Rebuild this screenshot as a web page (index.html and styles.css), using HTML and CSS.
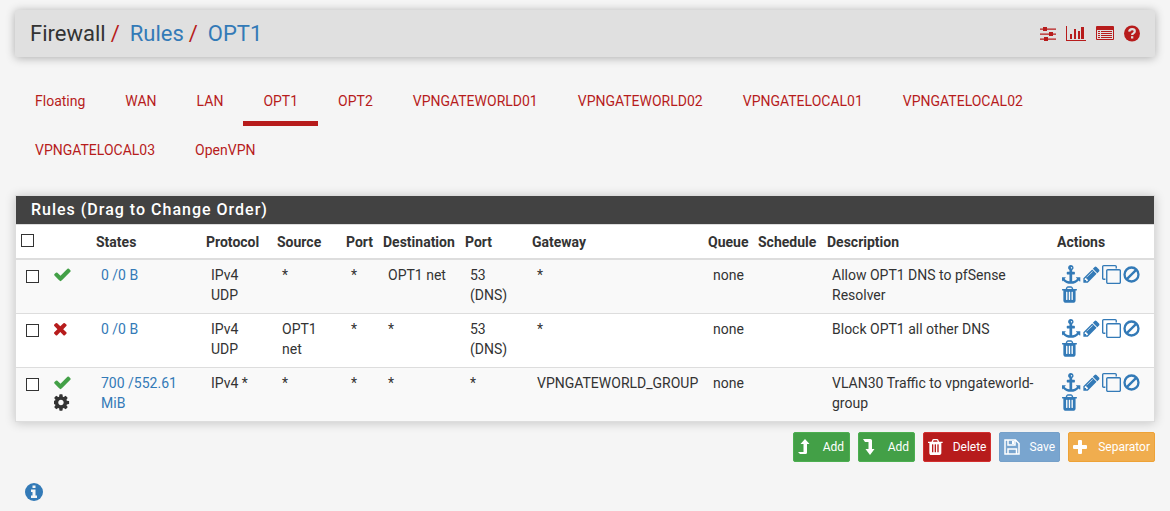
FILE: index.html
```html
<!DOCTYPE html>
<html lang="en">
<head>
<meta charset="utf-8">
<title>Firewall: Rules: OPT1</title>
<link rel="stylesheet" href="styles.css">
</head>
<body>
<svg class="sprite" aria-hidden="true">
  <symbol id="check" viewBox="192 0 1792 1792"><path d="M1671 566q0 40-28 68l-724 724-136 136q-28 28-68 28t-68-28l-136-136-362-362q-28-28-28-68t28-68l136-136q28-28 68-28t68 28l294 295 656-657q28-28 68-28t68 28l136 136q28 28 28 68z" transform="translate(90 0)"/></symbol>
  <symbol id="times" viewBox="300 0 1792 1792"><path d="M1490 1322q0 40-28 68l-136 136q-28 28-68 28t-68-28l-294-294-294 294q-28 28-68 28t-68-28l-136-136q-28-28-28-68t28-68l294-294-294-294q-28-28-28-68t28-68l136-136q28-28 68-28t68 28l294 294 294-294q28-28 68-28t68 28l136 136q28 28 28 68t-28 68l-294 294 294 294q28 28 28 68z"/></symbol>
  <symbol id="cog" viewBox="240 0 1792 1792"><path d="M1152 896q0-106-75-181t-181-75-181 75-75 181 75 181 181 75 181-75 75-181zm512-109v222q0 12-8 23t-20 13l-185 28q-19 54-39 91 35 50 107 138 10 12 10 25t-9 23q-27 37-99 108t-94 71q-12 0-26-9l-138-108q-44 23-91 38-16 136-29 186-7 28-36 28h-222q-14 0-24.500-8.500t-11.500-21.500l-28-184q-49-16-90-37l-141 107q-10 9-25 9-14 0-25-11-126-114-165-168-7-10-7-23 0-12 8-23 15-21 51-66.500t54-70.500q-27-50-41-99l-183-27q-13-2-21-12.500t-8-23.500v-222q0-12 8-23t19-13l186-28q14-46 39-92-40-57-107-138-10-12-10-24 0-10 9-23 26-36 98.500-107.500t94.500-71.500q13 0 26 10l138 107q44-23 91-38 16-136 29-186 7-28 36-28h222q14 0 24.500 8.500t11.500 21.500l28 184q49 16 90 37l142-107q9-9 24-9 13 0 25 10 129 119 165 170 7 8 7 22 0 12-8 23-15 21-51 66.500t-54 70.500q26 50 41 98l183 28q13 2 21 12.500t8 23.500z"/></symbol>
  <symbol id="anchor" viewBox="0 0 1792 1792"><path d="M960 256q0-26-19-45t-45-19-45 19-19 45 19 45 45 19 45-19 19-45zm768 928v352q0 22-20 30-8 2-12 2-12 0-23-9l-93-93q-119 143-318.500 226.500t-429.500 83.500-429.500-83.500-318.500-226.500l-93 93q-9 9-23 9-4 0-12-2-20-8-20-30v-352q0-14 9-23t23-9h352q22 0 30 20 8 19-7 35l-100 100q67 91 189.500 153.500t271.500 82.500v-647h-192q-26 0-45-19t-19-45v-128q0-26 19-45t45-19h192v-163q-58-34-93-92.500t-35-128.500q0-106 75-181t181-75 181 75 75 181q0 70-35 128.500t-93 92.500v163h192q26 0 45 19t19 45v128q0 26-19 45t-45 19h-192v647q149-20 271.500-82.500t189.500-153.500l-100-100q-15-16-7-35 8-20 30-20h352q14 0 23 9t9 23z"/></symbol>
  <symbol id="pencil" viewBox="0 0 1792 1792"><path d="M491 1536l91-91-235-235-91 91v107h128v128h107zm523-928q0-22-22-22-10 0-17 7l-542 542q-7 7-7 17 0 22 22 22 10 0 17-7l542-542q7-7 7-17zm-54-192l416 416-832 832h-416v-416zm683 96q0 53-37 90l-166 166-416-416 166-165q36-38 90-38 53 0 91 38l235 234q37 39 37 91z"/></symbol>
  <symbol id="clone" viewBox="0 0 1792 1792"><path d="M1664 1632v-1088q0-13-9.500-22.500t-22.500-9.500h-1088q-13 0-22.500 9.500t-9.500 22.500v1088q0 13 9.500 22.500t22.500 9.500h1088q13 0 22.500-9.500t9.500-22.500zm128-1088v1088q0 66-47 113t-113 47h-1088q-66 0-113-47t-47-113v-1088q0-66 47-113t113-47h1088q66 0 113 47t47 113zm-384-384v160h-128v-160q0-13-9.500-22.500t-22.500-9.500h-1088q-13 0-22.500 9.500t-9.500 22.500v1088q0 13 9.500 22.500t22.500 9.500h160v128h-160q-66 0-113-47t-47-113v-1088q0-66 47-113t113-47h1088q66 0 113 47t47 113z"/></symbol>
  <symbol id="ban" viewBox="0 0 1792 1792"><g fill="none" stroke="currentColor" stroke-width="220"><circle cx="896" cy="896" r="658"/><path d="M431 1361L1361 431"/></g></symbol>
  <symbol id="trash" viewBox="192 0 1792 1792"><path id="trash-shape" d="M704 1376v-704q0-14-9-23t-23-9h-64q-14 0-23 9t-9 23v704q0 14 9 23t23 9h64q14 0 23-9t9-23zm256 0v-704q0-14-9-23t-23-9h-64q-14 0-23 9t-9 23v704q0 14 9 23t23 9h64q14 0 23-9t9-23zm256 0v-704q0-14-9-23t-23-9h-64q-14 0-23 9t-9 23v704q0 14 9 23t23 9h64q14 0 23-9t9-23zm-544-992h448l-48-117q-7-9-17-11h-317q-10 2-17 11zm928 32v64q0 14-9 23t-23 9h-96v948q0 83-47 143.500t-113 60.500h-832q-66 0-113-58.500t-47-141.500v-952h-96q-14 0-23-9t-9-23v-64q0-14 9-23t23-9h309l70-167q15-37 54-63t79-26h320q40 0 79 26t54 63l70 167h309q14 0 23 9t9 23z"/></symbol>
  <symbol id="trash-large" viewBox="192 32 1536 1728"><use href="#trash-shape"/></symbol>
  <symbol id="sliders" viewBox="0 0 20 20"><path d="M2 4.500h16v1.300H2zM2 9.500h16v1.300H2zM2 14.500h16v1.300H2zM5 3h4v4H5zM11 8h4v4h-4zM6 13h4v4H6z"/></symbol>
  <symbol id="chart" viewBox="0 0 20 20"><path d="M0 2h1v14h19v1H0zM4 10h2v5H4zM8 5h2v10H8zM12 7h2v8h-2zM15 3h3v12h-3z"/></symbol>
  <symbol id="list" viewBox="0 0 20 20"><path fill-rule="evenodd" d="M3 2h16q1 0 1 1v12q0 1-1 1H3q-1 0-1-1V3q0-1 1-1zM3 6v9h16V6z"/><path d="M4 7h2v1H4zM7 7h11v1H7zM4 9h2v1H4zM7 9h11v1H7zM4 11h2v1H4zM7 11h11v1H7zM4 13h2v1H4zM7 13h11v1H7z"/></symbol>
  <symbol id="question" viewBox="0 0 20 20"><circle cx="10" cy="9.500" r="8"/><path d="M7.200 7.700q.2-2.600 2.900-2.600 2.700 0 2.700 2.200 0 1.300-1.500 2.100-1.200.6-1.200 1.700" fill="none" stroke="#e0e0e0" stroke-width="2.200"/><path fill="#e0e0e0" d="M9 12.200h2.300v2.300H9z"/></symbol>
  <symbol id="info" viewBox="0 0 18 18"><circle cx="9" cy="9" r="9"/><path fill="#f5f5f5" d="M7.500 2.500h3v2.500h-3zM6 6.500h4.500v6H12V15H6v-2.500h1.500V9H6z"/></symbol>
  <symbol id="up" viewBox="0 0 16 18"><path d="M0 14h5.500V6H2.500L7 1l4.500 5H9v8.500q0 1.500-1.500 1.500H2z"/></symbol>
  <symbol id="down" viewBox="0 0 16 18"><path d="M0 1h7.500Q9 1 9 2.500V11h2.500L7 17l-4.500-6h3V4H2z"/></symbol>
  <symbol id="save" viewBox="0 0 16 18"><path fill="none" stroke="currentColor" stroke-width="1.500" d="M1 2h10.500L15 5.500V16H1zM4 2v5h7V2M4 16v-5h8.500v5"/><path d="M8 3h2v3H8z"/></symbol>
  <symbol id="plus" viewBox="0 0 16 18"><path d="M6 2h2q1 0 1 1v4h4q1 0 1 1v2q0 1-1 1H9v4q0 1-1 1H6q-1 0-1-1v-4H1q-1 0-1-1V8q0-1 1-1h4V3q0-1 1-1z"/></symbol>
</svg>

<header class="page-header">
  <ol class="breadcrumb">
    <li>Firewall</li>
    <li><a href="#">Rules</a></li>
    <li><a href="#">OPT1</a></li>
  </ol>
  <nav class="header-tools" aria-label="Page tools">
    <a href="#" aria-label="Settings"><svg><use href="#sliders"/></svg></a>
    <a href="#" aria-label="Status"><svg><use href="#chart"/></svg></a>
    <a href="#" aria-label="Logs"><svg><use href="#list"/></svg></a>
    <a href="#" aria-label="Help"><svg><use href="#question"/></svg></a>
  </nav>
</header>

<nav class="tabs" aria-label="Interfaces">
  <a href="#">Floating</a>
  <a href="#">WAN</a>
  <a href="#">LAN</a>
  <a href="#" class="active" aria-current="page">OPT1</a>
  <a href="#">OPT2</a>
  <a href="#">VPNGATEWORLD01</a>
  <a href="#">VPNGATEWORLD02</a>
  <a href="#">VPNGATELOCAL01</a>
  <a href="#">VPNGATELOCAL02</a>
  <a href="#">VPNGATELOCAL03</a>
  <a href="#">OpenVPN</a>
</nav>

<main>
<section class="panel">
  <h2 class="panel-title">Rules (Drag to Change Order)</h2>
  <table class="rules">
    <colgroup>
      <col class="c-check"><col class="c-status"><col class="c-states"><col class="c-protocol"><col class="c-source"><col class="c-port"><col class="c-dest"><col class="c-dport"><col class="c-gateway"><col class="c-queue"><col class="c-schedule"><col class="c-desc"><col class="c-actions">
    </colgroup>
    <thead>
      <tr>
        <th><input type="checkbox" aria-label="Select all rules"></th>
        <th></th>
        <th>States</th><th>Protocol</th><th>Source</th><th>Port</th><th>Destination</th><th>Port</th><th>Gateway</th><th>Queue</th><th>Schedule</th><th>Description</th><th>Actions</th>
      </tr>
    </thead>
    <tbody>
      <tr>
        <td><input type="checkbox" aria-label="Select rule 1"></td>
        <td><div class="icons"><svg class="pass"><use href="#check"/></svg></div></td>
        <td><a href="#">0 /0 B</a></td>
        <td>IPv4 UDP</td><td>*</td><td>*</td><td>OPT1 net</td><td>53 (DNS)</td><td>*</td><td>none</td><td></td>
        <td>Allow OPT1 DNS to pfSense Resolver</td>
        <td><div class="icons">
          <a href="#" aria-label="Move"><svg><use href="#anchor"/></svg></a>
          <a href="#" aria-label="Edit"><svg><use href="#pencil"/></svg></a>
          <a href="#" aria-label="Copy"><svg><use href="#clone"/></svg></a>
          <a href="#" aria-label="Disable"><svg><use href="#ban"/></svg></a>
          <a href="#" aria-label="Delete"><svg><use href="#trash"/></svg></a>
        </div></td>
      </tr>
      <tr>
        <td><input type="checkbox" aria-label="Select rule 2"></td>
        <td><div class="icons"><svg class="block"><use href="#times"/></svg></div></td>
        <td><a href="#">0 /0 B</a></td>
        <td>IPv4 UDP</td><td>OPT1 net</td><td>*</td><td>*</td><td>53 (DNS)</td><td>*</td><td>none</td><td></td>
        <td>Block OPT1 all other DNS</td>
        <td><div class="icons">
          <a href="#" aria-label="Move"><svg><use href="#anchor"/></svg></a>
          <a href="#" aria-label="Edit"><svg><use href="#pencil"/></svg></a>
          <a href="#" aria-label="Copy"><svg><use href="#clone"/></svg></a>
          <a href="#" aria-label="Disable"><svg><use href="#ban"/></svg></a>
          <a href="#" aria-label="Delete"><svg><use href="#trash"/></svg></a>
        </div></td>
      </tr>
      <tr>
        <td><input type="checkbox" aria-label="Select rule 3"></td>
        <td><div class="icons"><svg class="pass"><use href="#check"/></svg><svg><use href="#cog"/></svg></div></td>
        <td><a href="#">700 /552.61 MiB</a></td>
        <td>IPv4 *</td><td>*</td><td>*</td><td>*</td><td>*</td><td>VPNGATEWORLD_GROUP</td><td>none</td><td></td>
        <td>VLAN30 Traffic to vpngateworld-group</td>
        <td><div class="icons">
          <a href="#" aria-label="Move"><svg><use href="#anchor"/></svg></a>
          <a href="#" aria-label="Edit"><svg><use href="#pencil"/></svg></a>
          <a href="#" aria-label="Copy"><svg><use href="#clone"/></svg></a>
          <a href="#" aria-label="Disable"><svg><use href="#ban"/></svg></a>
          <a href="#" aria-label="Delete"><svg><use href="#trash"/></svg></a>
        </div></td>
      </tr>
    </tbody>
  </table>
</section>

<div class="buttons">
  <button type="button" class="btn success"><svg><use href="#up"/></svg>Add</button>
  <button type="button" class="btn success"><svg><use href="#down"/></svg>Add</button>
  <button type="button" class="btn danger"><svg><use href="#trash-large"/></svg>Delete</button>
  <button type="button" class="btn primary"><svg><use href="#save"/></svg>Save</button>
  <button type="button" class="btn warning"><svg><use href="#plus"/></svg>Separator</button>
</div>

<button type="button" class="info" aria-label="Information"><svg><use href="#info"/></svg></button>
</main>
</body>
</html>
```
FILE: styles.css
```css
* { box-sizing: border-box; }

body {
  margin: 0;
  padding: 10px 15px;
  background: #f5f5f5;
  color: #333;
  font: 14px/20px Roboto, "Liberation Sans", sans-serif;
}

a { color: #337ab7; text-decoration: none; }
svg { display: block; fill: currentColor; }
.sprite { position: absolute; width: 0; height: 0; }

.page-header {
  display: flex;
  align-items: center;
  justify-content: space-between;
  padding: 8px 13px 8px 15px;
  background: #e0e0e0;
  border-radius: 2px;
  box-shadow: 0 1px 10px rgba(0, 0, 0, 0.3);
}

.breadcrumb {
  display: flex;
  margin: 0;
  padding: 0;
  list-style: none;
  font-size: 22px;
  line-height: 31px;
}
.breadcrumb li + li::before {
  content: "/";
  padding: 0 10px 0 5px;
  color: #b71c1c;
}

.header-tools { display: flex; gap: 8px; }
.header-tools a { color: #b71c1c; }
.header-tools svg { width: 20px; height: 20px; }

.tabs {
  display: flex;
  flex-wrap: wrap;
  margin-top: 20px;
}
.tabs a {
  padding: 14px 20px 10px;
  border-bottom: 5px solid transparent;
  color: #b71c1c;
}
.tabs a.active { border-bottom-color: #b71c1c; }

.panel {
  margin-top: 20px;
  border: 1px solid #ddd;
  background: #fff;
  box-shadow: 0 1px 10px rgba(0, 0, 0, 0.2);
}
.panel-title {
  margin: 0;
  padding: 4px 15px;
  background: #424242;
  border-bottom: 1px solid #ddd;
  color: #fff;
  font-size: 16px;
  font-weight: 500;
  letter-spacing: 1px;
}

.rules {
  width: 100%;
  table-layout: fixed;
  border-collapse: separate;
  border-spacing: 0;
}
.c-check { width: 28px; }
.c-status { width: 47px; }
.c-states { width: 110px; }
.c-protocol { width: 71px; }
.c-source { width: 69px; }
.c-port { width: 37px; }
.c-dest { width: 82px; }
.c-dport { width: 67px; }
.c-gateway { width: 176px; }
.c-queue { width: 50px; }
.c-schedule { width: 69px; }
.c-actions { width: 102px; }

.rules th {
  padding: 7px 0 6px 5px;
  border-bottom: 2px solid #ddd;
  text-align: left;
  vertical-align: top;
  white-space: nowrap;
}
.rules td {
  padding: 5px 5px 8px 10px;
  vertical-align: top;
}
.rules td:first-child { padding-right: 0; }
.rules tr + tr td { border-top: 1px solid #ddd; }
.rules tbody tr:nth-child(odd) { background: #f9f9f9; }

input[type="checkbox"] {
  display: block;
  width: 13px;
  height: 13px;
  margin: 5px 0 0;
  appearance: none;
  border: 1px solid #333;
  background: #fff;
}
th input[type="checkbox"] { margin-top: 2px; }
input[type="checkbox"]:checked { background: #337ab7; }

.icons { display: flex; flex-wrap: wrap; gap: 1px; }
.icons svg { width: 19px; height: 19px; }
.pass { color: #43a047; }
.block { color: #b71c1c; }

.buttons {
  display: flex;
  flex-wrap: wrap;
  justify-content: flex-end;
  gap: 8px;
  margin-top: 10px;
}
.btn {
  display: flex;
  align-items: center;
  gap: 9px;
  height: 30px;
  padding: 0 4px;
  border: 1px solid;
  border-radius: 2px;
  color: #fff;
  font: 12px/18px Roboto, "Liberation Sans", sans-serif;
}
.btn svg { width: 16px; height: 18px; }
.success { min-width: 57px; background: #43a047; border-color: #4caf50; }
.danger { background: #b71c1c; border-color: #d32f2f; }
.primary { background: #79a5cf; border-color: #75a0c9; }
.warning { background: #f0ad4e; border-color: #eea236; }

.info {
  display: block;
  margin: 21px 0 0 10px;
  padding: 0;
  border: 0;
  background: none;
  color: #337ab7;
}
.info svg { width: 18px; height: 18px; }
```
